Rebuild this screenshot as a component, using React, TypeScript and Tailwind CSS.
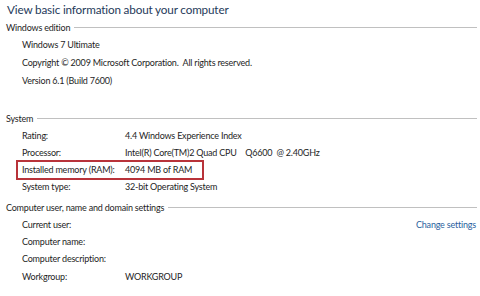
import React from 'react';

const font = { fontFamily: 'Lato, "Noto Sans", sans-serif' };

const SectionHeader = ({ title }: { title: string }) => (
    <div className="flex items-center h-[15px] pl-[6px] pr-[3px] gap-[4px]">
        <span className="text-[9px] tracking-[-0.2px] text-[#1e1e1e] whitespace-nowrap leading-none">{title}</span>
        <div className="flex-1 h-px bg-[#c0c0c0]" />
    </div>
);

const Row = ({ label, value, boxed, h = 'h-[17px]' }: { label: string; value?: string; boxed?: boolean; h?: string }) => (
    <div className={`flex items-center ${h} pl-[22px] text-[9px] tracking-[-0.2px] text-[#1e1e1e] leading-none relative`}>
        <span className="w-[103px] whitespace-nowrap">{label}</span>
        <span className="whitespace-pre">{value}</span>
        {boxed && (
            <div className="absolute left-[16px] top-[-1px] w-[188px] h-[20px] border-2 border-[#b8333a]" />
        )}
    </div>
);

export default function App() {
    return (
        <div className="w-[480px] h-[296px] bg-white overflow-hidden" style={font}>
            <div className="h-[20px] pl-[7px] flex items-center text-[11.7px] tracking-[-0.15px] text-[#1e3a5a] leading-none">
                View basic information about your computer
            </div>

            <SectionHeader title="Windows edition" />
            <div className="pl-[22px] text-[9px] tracking-[-0.2px] text-[#1e1e1e] leading-none">
                <div className="h-[18px] flex items-center">Windows 7 Ultimate</div>
                <div className="h-[18px] flex items-center whitespace-pre">Copyright © 2009 Microsoft Corporation.  All rights reserved.</div>
                <div className="h-[18px] flex items-center">Version 6.1 (Build 7600)</div>
            </div>

            <div className="mt-[22px]">
                <SectionHeader title="System" />
                <div className="pt-[1px]">
                    <Row label="Rating:" value="4.4 Windows Experience Index" />
                    <Row label="Processor:" value="Intel(R) Core(TM)2 Quad CPU    Q6600  @ 2.40GHz" />
                    <Row label="Installed memory (RAM):" value="4094 MB of RAM" boxed />
                    <Row label="System type:" value="32-bit Operating System" />
                </div>
            </div>

            <div className="mt-[5px]">
                <SectionHeader title="Computer user, name and domain settings" />
                <div className="pt-[1px] relative">
                    <Row label="Current user:" />
                    <Row label="Computer name:" />
                    <Row label="Computer description:" h="h-[17.5px]" />
                    <Row label="Workgroup:" value="WORKGROUP" />
                    <span className="absolute right-[4px] top-[1px] h-[17px] flex items-center text-[9px] tracking-[-0.2px] text-[#2a5f9e] leading-none">
                        Change settings
                    </span>
                </div>
            </div>
        </div>
    );
}
